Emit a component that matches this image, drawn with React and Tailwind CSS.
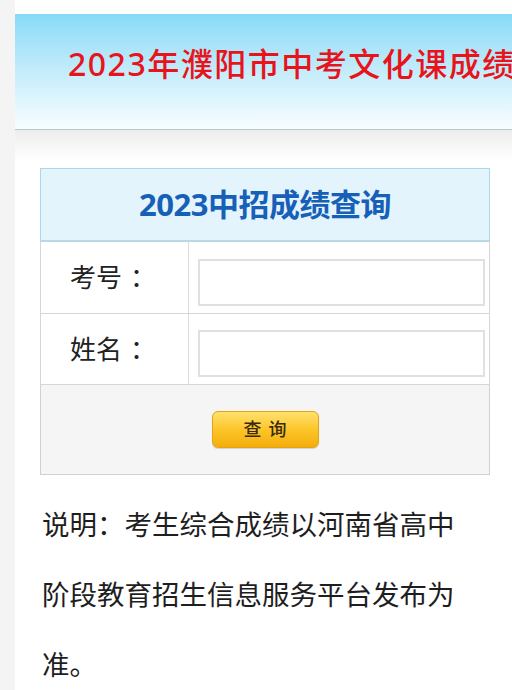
export default function App() {
  const font = { fontFamily: '"Noto Sans", "Noto Sans CJK SC", sans-serif' };
  return (
    <div className="w-[512px] h-[690px] overflow-hidden bg-[#f4f4f4] pl-[15px]" style={font}>
      <div className="bg-white h-full w-[497px] pt-[14px]">
        {/* header */}
        <div className="h-[116px] bg-linear-to-b from-[#86daf8] via-[#c4ecfb] to-[#f8fdff] border-b border-[#b9c9cc] overflow-hidden">
          <div className="pl-[53px] pt-[30px] whitespace-nowrap text-[#e8141c] font-medium text-[32px] leading-[40px] tracking-[1.5px]">
            2023年濮阳市中考文化课成绩查询
          </div>
        </div>
        <div className="h-[30px] bg-linear-to-b from-[#ededed] to-white" />

        {/* table */}
        <div className="ml-[25px] mt-[8px] w-[450px]">
          <div className="h-[74px] bg-[#e4f4fd] border border-[#a9d8ea] border-b-2 border-b-[#bcd8e4] flex items-center justify-center">
            <span className="text-[#1660b8] font-bold text-[31px] tracking-[-0.5px]">2023中招成绩查询</span>
          </div>
          <div className="grid grid-cols-[148px_1fr] h-[72px] border-x border-b border-[#d6d6d6]">
            <div className="border-r border-[#dcdcdc] flex items-center pl-[29px] text-[26px] text-[#222]">
              考号<span className="ml-[8px]">：</span>
            </div>
            <div className="pl-[9px] pr-[4px] pt-[17px]">
              <input className="w-full h-[47px] border-2 border-[#e0e0e0] bg-white outline-none" />
            </div>
          </div>
          <div className="grid grid-cols-[148px_1fr] h-[71px] border-x border-b border-[#d6d6d6]">
            <div className="border-r border-[#dcdcdc] flex items-center pl-[29px] text-[26px] text-[#222]">
              姓名<span className="ml-[8px]">：</span>
            </div>
            <div className="pl-[9px] pr-[4px] pt-[16px]">
              <input className="w-full h-[47px] border-2 border-[#e0e0e0] bg-white outline-none" />
            </div>
          </div>
          <div className="h-[90px] bg-[#f5f5f5] border-x border-b border-[#d0d0d0] flex items-center justify-center">
            <button className="w-[107px] h-[37px] rounded-[6px] bg-linear-to-b from-[#ffe169] via-[#fcc628] to-[#f4ad08] border border-[#e4a418] shadow-[0_1px_1px_rgba(0,0,0,0.15)] text-[18px] font-medium text-[#3a2a10] tracking-[7px] pl-[7px]">
              查询
            </button>
          </div>
        </div>

        {/* note */}
        <p className="ml-[27px] mt-[15px] w-[430px] text-[27.5px] leading-[70px] text-[#1e1e1e]">
          说明：考生综合成绩以河南省高中阶段教育招生信息服务平台发布为准。
        </p>
      </div>
    </div>
  );
}
